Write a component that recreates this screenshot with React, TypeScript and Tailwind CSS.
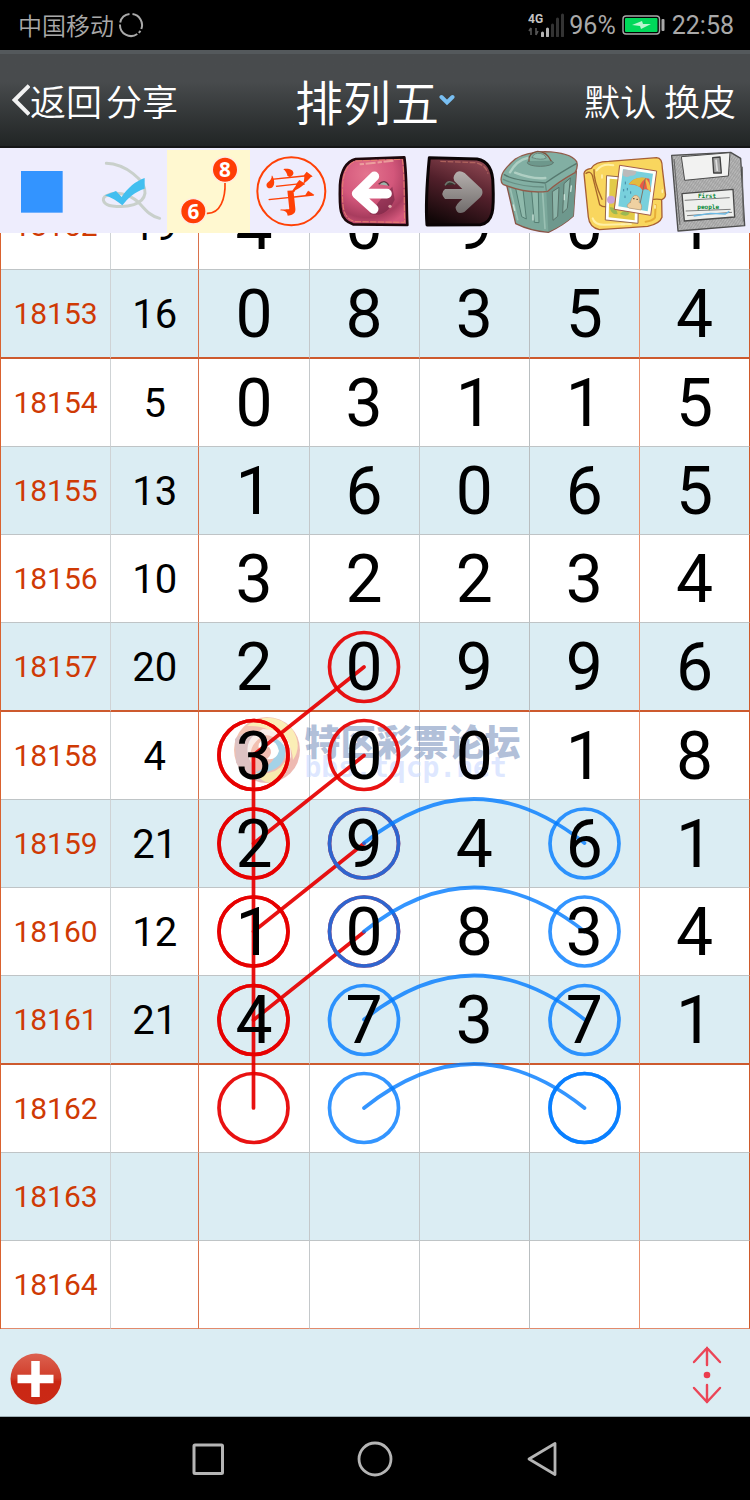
import type { ReactNode } from "react";

type Draw = { issue: string; sum: string; digits: string; major?: boolean };

const draws: Draw[] = [
  { issue: "18152", sum: "19", digits: "40901" },
  { issue: "18153", sum: "16", digits: "08354", major: true },
  { issue: "18154", sum: "5", digits: "03115" },
  { issue: "18155", sum: "13", digits: "16065" },
  { issue: "18156", sum: "10", digits: "32234" },
  { issue: "18157", sum: "20", digits: "20996", major: true },
  { issue: "18158", sum: "4", digits: "30018" },
  { issue: "18159", sum: "21", digits: "29461" },
  { issue: "18160", sum: "12", digits: "10834" },
  { issue: "18161", sum: "21", digits: "47371", major: true },
  { issue: "18162", sum: "", digits: "     " },
  { issue: "18163", sum: "", digits: "     " },
  { issue: "18164", sum: "", digits: "     " },
];

const CJK = "font-['Noto_Sans_CJK_SC',sans-serif]";

function StatusBar() {
  return (
    <div className="flex h-[50px] shrink-0 items-center justify-between bg-black px-4 text-[#a9a9a9]">
      <div className={`flex items-center gap-1 pl-0.5 text-[24px] leading-none ${CJK} font-[350]`}>
        <span>中国移动</span>
        <svg viewBox="0 0 26 26" className="size-[26px]" fill="none" stroke="#a9a9a9" strokeWidth="2">
          <path d="M14.500 2.100A11 11 0 0 1 23.300 17M22.500 18.800L20.800 20.800M19.300 22A11 11 0 0 1 2 12.500M2.200 10.500A11 11 0 0 1 11.500 2.100" />
        </svg>
      </div>
      <div className="flex items-center gap-1 font-['Roboto',sans-serif] text-[25px] leading-none">
        <svg viewBox="0 0 37 24" className="h-6 w-[37px]">
          <text x="0" y="10" fontSize="12" fontWeight="700" fill="#c4c4c4">4G</text>
          <path d="M3 15v7M1 18l2-3M8 15v7M10 18l-2 4" stroke="#555" strokeWidth="1.6" fill="none" />
          <path d="M14.500 23v-3M19.500 23v-7" stroke="#b5b5b5" strokeWidth="3" strokeLinecap="round" />
          <path d="M24.500 23V12M29.500 23V6M34.500 23V2" stroke="#333" strokeWidth="3" strokeLinecap="round" />
        </svg>
        <span>96%</span>
        <svg viewBox="0 0 44 20" className="ml-0.5 h-5 w-11">
          <rect x="1" y="1" width="36.500" height="18" rx="3" fill="#000" stroke="#a9a9a9" strokeWidth="1.4" />
          <rect x="3" y="3" width="32.500" height="14" rx="1" fill="#00d95a" />
          <path d="M10 10l10-4 1 3h8l-10 5-1-3z" fill="#b9f5cf" />
          <rect x="39.500" y="4" width="3" height="12" rx="1" fill="#a9a9a9" />
        </svg>
        <span className="ml-0.5">22:58</span>
      </div>
    </div>
  );
}

function Header() {
  return (
    <header
      className={`grid h-[98px] shrink-0 grid-cols-[1fr_auto_1fr] items-center border-t-4 border-b-2 border-t-[#54595c] border-b-[#151617] bg-linear-to-b from-[#484b4d] from-30% to-[#212525] px-3 text-white ${CJK} font-[350]`}
    >
      <div className="flex items-center text-[36px] leading-none">
        <button className="flex items-center">
          <svg viewBox="0 0 20 36" className="h-9 w-[18px]" fill="none" stroke="#f2f2f2" strokeWidth="4.500">
            <path d="M19 2L3 18l16 16" />
          </svg>
          返回
        </button>
        <button className="ml-1">分享</button>
      </div>
      <button className="flex items-center text-[48px] leading-none">
        <span>排列五</span>
        <svg viewBox="0 0 16 12" className="h-3 w-4" fill="none" stroke="#79bff2" strokeWidth="4" strokeLinecap="round">
          <path d="M2.500 3L8 8.500 13.500 3" />
        </svg>
      </button>
      <div className="flex items-center justify-end gap-2 pr-0.5 text-[36px] leading-none">
        <button>默认</button>
        <button>换皮</button>
      </div>
    </header>
  );
}

function ColorIcon() {
  return (
    <svg viewBox="0 15 250 249" className="size-full">
      <rect x="63" y="78" width="125" height="125" fill="#3394ff" />
    </svg>
  );
}

function LassoIcon() {
  return (
    <svg viewBox="250 15 250 249" className="size-full" fill="none">
      <path
        d="M320 55C375 57 440 105 436 145C431 179 385 189 338 183C311 180 303 160 320 152C345 137 385 145 416 171C441 199 452 213 480 220"
        stroke="#c9d0cb"
        strokeWidth="9"
        strokeLinecap="round"
      />
      <path d="M316 151L349 138L366 156C384 128 409 108 435 99V131C404 141 386 158 368 181C352 168 337 158 316 151Z" fill="#42bff0" />
    </svg>
  );
}

function LinkIcon() {
  return (
    <svg viewBox="500 15 250 249" className="size-full">
      <path d="M674 112C676 160 660 207 619 205" fill="none" stroke="#ff4208" strokeWidth="5" />
      <circle cx="674" cy="74" r="38" fill="#ff3d06" stroke="#ffeae4" strokeWidth="4" />
      <circle cx="579" cy="199" r="38" fill="#ff3d06" stroke="#ffeae4" strokeWidth="4" />
      <g fill="#fff" fontFamily="Noto Sans, sans-serif" fontWeight="700" fontSize="62" textAnchor="middle">
        <text x="674" y="96">8</text>
        <text x="579" y="221">6</text>
      </g>
    </svg>
  );
}

function CharacterIcon() {
  return (
    <svg viewBox="0 15 250 249" className="size-full">
      <circle cx="124" cy="139" r="102" fill="none" stroke="#ff4106" strokeWidth="6" />
      <text
        x="122"
        y="197"
        transform="rotate(-6 124 139)"
        textAnchor="middle"
        fontFamily="Noto Serif CJK SC, Noto Sans CJK SC, sans-serif"
        fontWeight="700"
        fontSize="150"
        fill="#ff4106"
      >
        字
      </text>
    </svg>
  );
}

function UndoIcon() {
  return (
    <svg viewBox="250 15 250 249" className="size-full">
      <defs>
        <radialGradient id="undo-fill" cx="0.4" cy="0.25" r="0.8">
          <stop offset="0" stopColor="#e4748e" />
          <stop offset="0.5" stopColor="#d3577b" />
          <stop offset="0.8" stopColor="#a83c5e" />
          <stop offset="1" stopColor="#d4587c" />
        </radialGradient>
      </defs>
      <path d="M318 42L464 37C472 90 470 190 473 240L310 238C269 225 269 190 271 120C274 75 290 50 318 42Z" fill="url(#undo-fill)" stroke="#1d080c" strokeWidth="8" strokeLinejoin="round" />
      <path d="M318 48L458 43C465 90 463 180 465 232L316 230C280 220 277 190 279 120C281 80 296 55 318 48Z" fill="none" stroke="#e9846f" strokeWidth="3" strokeDasharray="19 4" />
      <path d="M330 58L435 47" stroke="#f2b2a6" strokeWidth="6" strokeDasharray="13 5 30 6" opacity="0.75" />
      <path d="M360 207Q410 220 435 164L428 125Q400 150 360 207" fill="#6e203f" opacity="0.55" />
      <path d="M387 118Q405 100 418 122" fill="#9bb5aa" stroke="#64313f" strokeWidth="4" />
      <path d="M374 94L321 146L372 192M324 146H412" fill="none" stroke="#fff" strokeWidth="29" strokeLinecap="round" strokeLinejoin="round" />
      <circle cx="421" cy="184" r="5" fill="#dca6a8" />
    </svg>
  );
}

function RedoIcon() {
  return (
    <svg viewBox="500 15 250 249" className="size-full">
      <defs>
        <linearGradient id="redo-fill" x1="0.7" y1="0" x2="0.3" y2="1">
          <stop offset="0" stopColor="#8f4752" />
          <stop offset="0.45" stopColor="#52202b" />
          <stop offset="1" stopColor="#120708" />
        </linearGradient>
        <linearGradient id="redo-arrow" x1="0" y1="0" x2="0" y2="1">
          <stop offset="0" stopColor="#b6b0ae" />
          <stop offset="1" stopColor="#706c6b" />
        </linearGradient>
      </defs>
      <path d="M537 38L680 42C715 48 728 75 728 120C731 190 730 233 690 239L530 240C526 190 532 90 537 38Z" fill="url(#redo-fill)" stroke="#0b0405" strokeWidth="9" strokeLinejoin="round" />
      <path d="M570 49L674 53Q705 58 713 86" fill="none" stroke="#c47367" strokeWidth="4" strokeDasharray="17 5" opacity="0.7" />
      <path d="M584 121Q595 101 615 118" fill="#36372f" stroke="#6e756d" strokeWidth="4" />
      <path
        d="M611 92Q622 70 643 84L694 132Q701 146 690 157L642 201Q620 211 616 190Q614 181 636 162H584Q568 145 584 132H636L612 108Q607 100 611 92Z"
        fill="url(#redo-arrow)"
      />
    </svg>
  );
}

function TrashIcon() {
  return (
    <svg viewBox="15 15 250 249" className="size-full" strokeLinejoin="round" strokeLinecap="round">
      <path d="M35 120L62 236Q106 258 160 262Q205 241 235 213L244 78Z" fill="#7ba89b" stroke="#8b5547" strokeWidth="4" />
      <path d="M154 140L160 260Q205 241 235 213L243 85Z" fill="#6e988d" />
      <path d="M62 130L80 215L94 222L84 134ZM110 140L118 232L132 233L130 142Z" fill="#8fbaac" stroke="#547d72" strokeWidth="3" />
      <path d="M172 141L174 226L188 214L192 128ZM207 117L203 204L217 190L226 100Z" fill="#8cb5a9" stroke="#577168" strokeWidth="3" />
      <path d="M143 144L150 250M46 132L68 224" fill="none" stroke="#a7cabd" strokeWidth="5" opacity="0.7" />
      <path d="M19 97Q20 77 61 42Q91 22 149 20Q226 22 245 50Q250 68 240 83Q188 112 158 139Q92 147 24 118Q16 112 19 97Z" fill="#82afa3" stroke="#925b4a" strokeWidth="4" />
      <path d="M28 89Q52 106 151 114Q202 79 244 56" fill="none" stroke="#56796f" strokeWidth="4" />
      <path d="M151 115L154 137M25 103Q70 125 145 126" fill="none" stroke="#688f84" strokeWidth="4" />
      <path d="M45 82Q66 45 98 39M60 83Q110 103 151 99" fill="none" stroke="#bdd9ce" strokeWidth="7" opacity="0.75" />
      <ellipse cx="136" cy="53" rx="39" ry="11" fill="#6d988c" stroke="#607a70" strokeWidth="3" />
      <path d="M102 48Q99 24 128 19Q156 20 168 47" fill="#84b1a3" stroke="#80523f" strokeWidth="4" />
      <path d="M112 38Q113 26 128 25Q148 24 154 39Q139 47 112 38Z" fill="#93c0b2" stroke="#6c8980" strokeWidth="3" />
      <path d="M114 210V225M55 180L59 196M208 149V164M229 123L227 139" stroke="#cae2d8" strokeWidth="4" />
    </svg>
  );
}

function GalleryIcon() {
  return (
    <svg viewBox="265 15 250 249" className="size-full" strokeLinejoin="round" strokeLinecap="round">
      <path d="M268 86Q269 73 290 70Q300 50 342 49L486 38Q503 38 503 70L512 145Q515 158 501 164L502 217Q495 237 459 244L314 254Q284 247 281 216Z" fill="#f9d65e" stroke="#a75f35" strokeWidth="4" />
      <path d="M274 85Q287 76 293 91L315 179Q324 188 343 185M298 74Q296 105 322 163M501 164Q489 161 477 163" fill="none" stroke="#a8672c" strokeWidth="4" />
      <path d="M306 76Q323 54 356 61M294 220Q301 241 331 239L409 237" fill="none" stroke="#fff0a6" strokeWidth="6" />
      <path d="M483 180L481 218Q473 228 453 230" fill="none" stroke="#e7ae38" strokeWidth="6" />
      <path d="M337 92L432 101L430 235L333 225Z" fill="#fff" stroke="#93654d" strokeWidth="3" />
      <path d="M345 101L423 107L420 226L342 217Z" fill="#e2ca48" />
      <circle cx="349" cy="164" r="12" fill="#c9a2d8" />
      <path d="M345 187Q365 184 369 207Q349 211 345 187M376 207Q388 190 405 204Q398 219 376 207" fill="#9cb952" />
      <path d="M376 61L486 78L468 211L360 193Z" fill="#fffdf7" stroke="#a25c49" strokeWidth="3" />
      <path d="M385 73L475 86L459 199L371 184Z" fill="#78d0dc" />
      <path d="M386 73L425 78Q426 93 407 92Q395 100 384 91Z" fill="#bababa" />
      <path d="M402 118Q419 91 464 101L469 142Q459 128 443 135Q434 119 402 118Z" fill="#e95b46" />
      <path d="M402 118Q419 91 457 99Q440 106 434 126Q421 114 402 118Z" fill="#e2bb3e" />
      <path d="M449 99Q468 107 468 141L457 130Q456 115 449 99Z" fill="#f2be4a" />
      <path d="M452 101L436 177" stroke="#7f7164" strokeWidth="3" />
      <path d="M407 172Q413 149 425 151Q438 156 433 172Q445 178 439 195L402 189Q391 181 407 172Z" fill="#efd1a1" stroke="#b98f6b" strokeWidth="2" />
      <path d="M417 161h1M427 163h1" stroke="#594438" strokeWidth="4" />
      <path d="M392 111v6M387 133v5M398 130v5M408 140v5M391 153v5" stroke="#4187a5" strokeWidth="3" />
      <path d="M322 90v9M503 135v7M481 182v7M380 238h9" stroke="#fff0b0" strokeWidth="5" />
    </svg>
  );
}

function SaveIcon() {
  return (
    <svg viewBox="515 15 250 249" className="size-full" strokeLinejoin="round">
      <defs>
        <pattern id="pencil" width="7" height="17" patternUnits="userSpaceOnUse" patternTransform="rotate(34)">
          <rect width="7" height="17" fill="#b1b1b1" />
          <path d="M2 0V17" stroke="#828282" strokeWidth="1.500" />
          <path d="M5 0V10" stroke="#c4c4c4" strokeWidth="2" />
        </pattern>
      </defs>
      <path d="M529 31L706 22L736 40L748 242L548 258Z" fill="url(#pencil)" stroke="#4e4e4e" strokeWidth="4" />
      <path d="M558 35L704 23L699 93L568 106Z" fill="#f2f2f1" stroke="#4d4d4d" strokeWidth="3" />
      <path d="M652 38L674 36L678 84L655 84Z" fill="#a3a3a3" stroke="#404040" strokeWidth="4" />
      <path d="M662 44L666 78" stroke="#dedede" strokeWidth="5" />
      <path d="M560 146L713 133L718 216L567 228Z" fill="#eeefed" stroke="#4a4a4a" strokeWidth="4" />
      <path d="M568 166L703 158M571 198L706 193M575 212L710 202" stroke="#666" strokeWidth="2.500" />
      <path d="M595 213L645 205L690 207L702 199" fill="none" stroke="#6bb9e4" strokeWidth="4" />
      <g fill="#078834" fontFamily="DejaVu Sans Mono, monospace" fontWeight="700" fontSize="18">
        <text x="608" y="158">First</text>
        <text x="606" y="191">people</text>
      </g>
      <path d="M536 42L554 240M741 65L744 229" stroke="#656565" strokeWidth="3" fill="none" />
    </svg>
  );
}

const tools: { label: string; icon: ReactNode; active?: boolean }[] = [
  { label: "颜色", icon: <ColorIcon /> },
  { label: "套索", icon: <LassoIcon /> },
  { label: "连线", icon: <LinkIcon />, active: true },
  { label: "文字", icon: <CharacterIcon /> },
  { label: "撤销", icon: <UndoIcon /> },
  { label: "重做", icon: <RedoIcon /> },
  { label: "清空", icon: <TrashIcon /> },
  { label: "图库", icon: <GalleryIcon /> },
  { label: "保存", icon: <SaveIcon /> },
];

function Toolbar() {
  return (
    <div className="grid shrink-0 grid-cols-9 bg-[#eeedfd] pt-0.5">
      {tools.map((tool) => (
        <button key={tool.label} aria-label={tool.label} className={tool.active ? "h-[83px] bg-[#fff8d0]" : "h-[83px]"}>
          {tool.icon}
        </button>
      ))}
    </div>
  );
}

const redCircles = [
  [364, 667], [253.5, 755], [253.5, 755], [364, 755],
  [253.5, 843.5], [253.5, 843.5], [364, 843.5],
  [253.5, 931.5], [253.5, 931.5], [364, 931.5],
  [253.5, 1020], [253.5, 1020], [253.5, 1108],
];
const blueCircles = [
  [364, 843.5], [584.5, 843.5], [364, 931.5], [584.5, 931.5],
  [364, 1020], [584.5, 1020], [364, 1108], [584.5, 1108], [584.5, 1108],
];
const rows = [755, 843.5, 931.5, 1020];

function Annotations() {
  return (
    <svg
      viewBox="0 269 750 1060"
      preserveAspectRatio="none"
      className="pointer-events-none absolute bottom-0 left-0 h-[1060px] w-full"
      fill="none"
      strokeWidth="3.700"
      strokeLinecap="round"
    >
      <g stroke="#e60000" strokeOpacity="0.93">
        {redCircles.map(([x, y], i) => (
          <circle key={i} cx={x} cy={y} r="34.500" />
        ))}
        {rows.map((y) => (
          <path key={y} d={`M364 ${y - 88}L253.500 ${y}`} />
        ))}
        <path d="M253.500 755V1108" />
      </g>
      <g stroke="#007aff" strokeOpacity="0.8">
        {blueCircles.map(([x, y], i) => (
          <circle key={i} cx={x} cy={y} r="34.500" />
        ))}
        {rows.map((y) => (
          <path key={y} d={`M364 ${y + 88}Q474 ${y} 584.500 ${y + 88}`} />
        ))}
      </g>
    </svg>
  );
}

function Watermark() {
  return (
    <div className="pointer-events-none absolute bottom-[545px] left-[31%] flex items-center gap-1">
      <svg viewBox="0 0 68 68" className="size-[68px] opacity-50">
        <defs>
          <linearGradient id="ball" x1="0" y1="0" x2="1" y2="1">
            <stop offset="0" stopColor="#ed8d65" />
            <stop offset="1" stopColor="#db7065" />
          </linearGradient>
        </defs>
        <circle cx="34" cy="34" r="33" fill="url(#ball)" />
        <path d="M14 10Q38-8 59 13Q70 29 60 44Q58 21 41 16Q28 9 14 10Z" fill="#f8df70" />
        <path d="M2 23Q10 14 25 17Q10 29 18 46Q26 61 42 65Q13 70 3 46Z" fill="#bd8688" />
        <path d="M23 57Q46 60 54 42L56 46Q50 64 37 67Q28 66 23 57Z" fill="#f0d45f" />
        <path d="M38 22Q57 24 51 43Q45 57 22 57Q40 49 42 39Q42 31 33 28Z" fill="#4ba6d0" />
        <path d="M28 25Q43 21 46 35Q43 45 34 43Q41 37 36 31Q31 31 30 36Q22 31 28 25Z" fill="#fff" />
        <path d="M18 47Q7 24 30 13Q60 13 58 43Q49 20 32 19Q14 28 18 47Z" fill="#fff" opacity="0.7" />
      </svg>
      <div className="flex flex-col">
        <span className={`text-[36px] leading-9 font-black text-[#6f89b9]/55 ${CJK}`}>特区彩票论坛</span>
        <span className="font-['DejaVu_Sans_Mono',monospace] text-[28px] leading-5 font-bold text-[#c8d8ff]/60">bbs.tqcp.net</span>
      </div>
    </div>
  );
}

const digitBorders = [
  "border-r border-r-[#c4c8ca]",
  "border-r border-r-[#c4c8ca]",
  "border-r border-r-[#b9bec0]",
  "border-r border-r-[#e8916f]",
  "border-r border-r-[#cf5a2b]",
];

function TrendTable() {
  return (
    <div className="relative isolate shrink-0 font-['Roboto',sans-serif] text-black">
      <table className="w-full table-fixed border-separate border-spacing-0 border-l border-[#d9622f] text-center leading-none">
        <colgroup>
          <col className="w-[14.7%]" />
          <col className="w-[11.8%]" />
          <col className="w-[14.7%]" />
          <col className="w-[14.7%]" />
          <col className="w-[14.7%]" />
          <col className="w-[14.7%]" />
          <col className="w-[14.7%]" />
        </colgroup>
        <tbody>
          {draws.map((draw, i) => {
            const last = i === draws.length - 1;
            const line = draw.major
              ? "h-[89px] border-b-2 border-b-[#cd5a2e]"
              : last
                ? "h-[88px] border-b border-b-[#e28a6c]"
                : "h-[88px] border-b border-b-[#bfc4c6]";
            return (
              <tr key={draw.issue} className={i % 2 ? "bg-[#dbedf3]" : "bg-white"}>
                <th className={`${line} border-r border-r-[#cfd3d5] p-0 text-[30px] font-normal text-[#cf3a04]`}>{draw.issue}</th>
                <td className={`${line} border-r border-r-[#d9724b] p-0 pt-0.5 text-[40px]`}>{draw.sum}</td>
                {draw.digits.split("").map((digit, j) => (
                  <td key={j} className={`${line} ${digitBorders[j]} p-0 pt-0.5 text-[66px]`}>
                    <span className="relative z-10">{digit}</span>
                  </td>
                ))}
              </tr>
            );
          })}
        </tbody>
      </table>
      <Watermark />
      <Annotations />
    </div>
  );
}

function ActionBar() {
  return (
    <div className="flex h-[88px] shrink-0 items-center justify-between border-b border-[#9fb0b6] bg-[#dbedf3] px-2.5">
      <button aria-label="添加" className="pt-3">
        <svg viewBox="0 0 52 52" className="size-[52px]">
          <defs>
            <linearGradient id="add" x1="0" y1="0" x2="0" y2="1">
              <stop offset="0" stopColor="#dc6150" />
              <stop offset="0.48" stopColor="#d03c29" />
              <stop offset="0.55" stopColor="#ca2714" />
              <stop offset="1" stopColor="#ca2916" />
            </linearGradient>
          </defs>
          <circle cx="26" cy="26" r="25.500" fill="url(#add)" />
          <path d="M25.500 8v36M7.500 26h36" stroke="#fff" strokeWidth="8.500" />
        </svg>
      </button>
      <button aria-label="上下移动" className="mr-4 pt-1">
        <svg viewBox="0 0 34 60" className="h-[60px] w-[34px]" fill="none" stroke="#eb4557" strokeWidth="2.400" strokeLinecap="round">
          <path d="M17 3v17M4 17L17 3l13 14M17 40v17M4 43l13 14 13-14" />
          <circle cx="17" cy="30" r="3.300" fill="#eb3c4e" stroke="none" />
        </svg>
      </button>
    </div>
  );
}

function NavigationBar() {
  return (
    <nav className="flex h-[83px] shrink-0 justify-center bg-black">
      <div className="grid w-2/3 grid-cols-3 place-items-center">
        <button aria-label="最近任务">
          <svg viewBox="0 0 36 36" className="size-9" fill="none" stroke="#b5b5b5" strokeWidth="3">
            <rect x="4" y="4" width="28.500" height="28.500" rx="1" />
          </svg>
        </button>
        <button aria-label="主屏幕">
          <svg viewBox="0 0 36 36" className="size-9" fill="none" stroke="#b5b5b5" strokeWidth="2.800">
            <circle cx="18" cy="18" r="16" />
          </svg>
        </button>
        <button aria-label="返回">
          <svg viewBox="0 0 36 36" className="size-9" fill="none" stroke="#b5b5b5" strokeWidth="2.800" strokeLinejoin="round">
            <path d="M31 2.500v31L5 18z" />
          </svg>
        </button>
      </div>
    </nav>
  );
}

export default function App() {
  return (
    <div className="flex h-screen flex-col bg-white">
      <StatusBar />
      <Header />
      <Toolbar />
      <main className="flex min-h-0 flex-1 flex-col justify-end overflow-hidden">
        <TrendTable />
      </main>
      <ActionBar />
      <NavigationBar />
    </div>
  );
}
